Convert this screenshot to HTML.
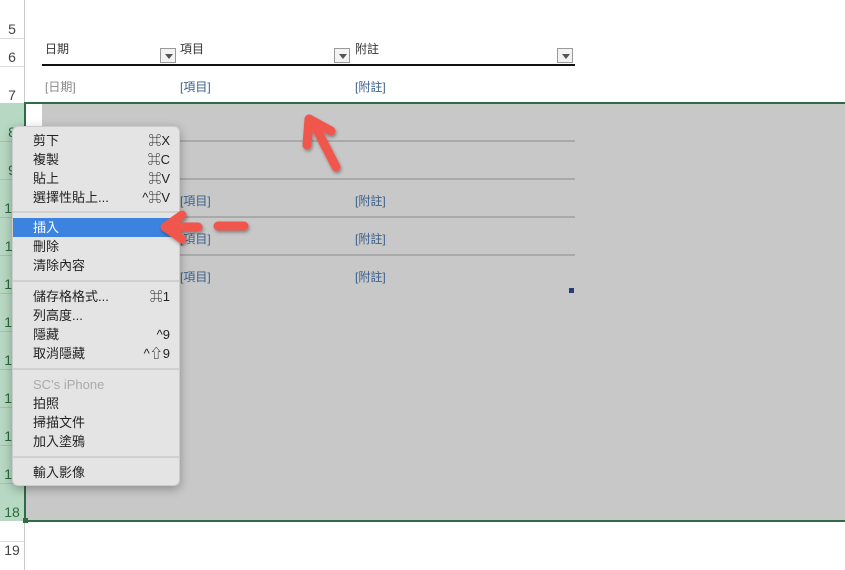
<!DOCTYPE html>
<html><head><meta charset="utf-8"><style>
*{margin:0;padding:0;box-sizing:border-box}
body{width:845px;height:570px;overflow:hidden;background:#fff;position:relative;font-family:"Liberation Sans","Noto Sans CJK TC",sans-serif}
.a{position:absolute}
.rh{position:absolute;left:0;width:24px;font-size:14px;color:#444;text-align:center}
.hl{position:absolute;left:0;width:24px;height:1px;background:#ddd}
.t{position:absolute;font-size:12px}
.lk{color:#3a5f8a}
.dd{position:absolute;width:16px;height:15px;border:1px solid #999;background:#f3f3f3}
.dd:after{content:"";position:absolute;left:4px;top:5px;border-left:4px solid transparent;border-right:4px solid transparent;border-top:5px solid #555}
.gl{position:absolute;left:42px;width:533px;height:2px;background:#a9a9a9}
.menu{position:absolute;left:12px;top:126px;width:168px;height:360px;background:#e4e4e4;border-radius:6px;box-shadow:0 3px 10px rgba(0,0,0,.3);border:1px solid #ccc}
.mi{position:absolute;left:0;width:166px;height:19px;font-size:13px;color:#222;padding-left:20px;line-height:19px}
.mi span{position:absolute;right:9px;top:0}
.sep{position:absolute;left:0;width:166px;height:2px;background:#d0d0d0}
</style></head><body>
<div class="a" style="left:0;top:103px;width:24px;height:418px;background:#b7d8c2"></div>
<div class="a" style="left:24px;top:0;width:1px;height:570px;background:#ccc"></div>
<div class="rh" style="top:21px">5</div>
<div class="rh" style="top:49px">6</div>
<div class="rh" style="top:87px">7</div>
<div class="rh" style="top:124px;color:#2a6a3c">8</div>
<div class="rh" style="top:162px;color:#2a6a3c">9</div>
<div class="rh" style="top:200px;color:#2a6a3c">10</div>
<div class="rh" style="top:238px;color:#2a6a3c">11</div>
<div class="rh" style="top:276px;color:#2a6a3c">12</div>
<div class="rh" style="top:314px;color:#2a6a3c">13</div>
<div class="rh" style="top:352px;color:#2a6a3c">14</div>
<div class="rh" style="top:390px;color:#2a6a3c">15</div>
<div class="rh" style="top:428px;color:#2a6a3c">16</div>
<div class="rh" style="top:466px;color:#2a6a3c">17</div>
<div class="rh" style="top:504px;color:#2a6a3c">18</div>
<div class="rh" style="top:542px">19</div>
<div class="hl" style="top:38px"></div><div class="hl" style="top:66px"></div><div class="hl" style="top:141px;background:#9cc7aa"></div><div class="hl" style="top:179px;background:#9cc7aa"></div><div class="hl" style="top:217px;background:#9cc7aa"></div><div class="hl" style="top:255px;background:#9cc7aa"></div><div class="hl" style="top:293px;background:#9cc7aa"></div><div class="hl" style="top:331px;background:#9cc7aa"></div><div class="hl" style="top:369px;background:#9cc7aa"></div><div class="hl" style="top:407px;background:#9cc7aa"></div><div class="hl" style="top:445px;background:#9cc7aa"></div><div class="hl" style="top:483px;background:#9cc7aa"></div><div class="hl" style="top:541px"></div>
<div class="t" style="left:45px;top:40px;color:#333">日期</div>
<div class="dd" style="left:160px;top:48px"></div>
<div class="t" style="left:180px;top:40px;color:#333">項目</div>
<div class="dd" style="left:334px;top:48px"></div>
<div class="t" style="left:355px;top:40px;color:#333">附註</div>
<div class="dd" style="left:557px;top:48px"></div>
<div class="a" style="left:42px;top:64px;width:533px;height:2px;background:#111"></div>
<div class="t" style="left:45px;top:78px;color:#888">[日期]</div>
<div class="t lk" style="left:180px;top:78px">[項目]</div>
<div class="t lk" style="left:355px;top:78px">[附註]</div>
<div class="a" style="left:25px;top:103px;width:820px;height:418px;background:#c8c8c8"></div>
<div class="a" style="left:25px;top:103px;width:17px;height:38px;background:#fff"></div>
<div class="a" style="left:24px;top:102px;width:821px;height:2px;background:#2f6b44"></div>
<div class="a" style="left:24px;top:520px;width:821px;height:2px;background:#2f6b44"></div>
<div class="a" style="left:24px;top:102px;width:2px;height:420px;background:#2f6b44"></div>
<div class="a" style="left:23px;top:518px;width:5px;height:5px;background:#2f6b44"></div>
<div class="gl" style="top:140px"></div><div class="gl" style="top:178px"></div><div class="gl" style="top:216px"></div><div class="gl" style="top:254px"></div>
<div class="t lk" style="left:180px;top:192px">[項目]</div><div class="t lk" style="left:355px;top:192px">[附註]</div>
<div class="t lk" style="left:180px;top:230px">[項目]</div><div class="t lk" style="left:355px;top:230px">[附註]</div>
<div class="t lk" style="left:180px;top:268px">[項目]</div><div class="t lk" style="left:355px;top:268px">[附註]</div>
<div class="a" style="left:569px;top:288px;width:5px;height:5px;background:#2a3a7a"></div>
<div class="menu">
<div class="mi" style="top:4px">剪下<span>⌘X</span></div>
<div class="mi" style="top:23px">複製<span>⌘C</span></div>
<div class="mi" style="top:42px">貼上<span>⌘V</span></div>
<div class="mi" style="top:61px">選擇性貼上...<span>^⌘V</span></div>
<div class="sep" style="top:84px"></div>
<div class="mi" style="top:91px;background:#3b83de;color:#fff">插入</div>
<div class="mi" style="top:110px">刪除</div>
<div class="mi" style="top:129px">清除內容</div>
<div class="sep" style="top:153px"></div>
<div class="mi" style="top:160px">儲存格格式...<span>⌘1</span></div>
<div class="mi" style="top:179px">列高度...</div>
<div class="mi" style="top:198px">隱藏<span>^9</span></div>
<div class="mi" style="top:217px">取消隱藏<span>^⇧9</span></div>
<div class="sep" style="top:241px"></div>
<div class="mi" style="top:248px;color:#aaa">SC’s iPhone</div>
<div class="mi" style="top:267px">拍照</div>
<div class="mi" style="top:286px">掃描文件</div>
<div class="mi" style="top:305px">加入塗鴉</div>
<div class="sep" style="top:329px"></div>
<div class="mi" style="top:336px">輸入影像</div>
</div>
<svg class="a" style="left:0;top:0" width="845" height="570">
<defs><filter id="s"><feDropShadow dx="1" dy="2" stdDeviation="1.5" flood-opacity=".35"/></filter></defs>
<g stroke="#f0574b" stroke-width="9" stroke-linecap="round" stroke-linejoin="round" fill="none" filter="url(#s)">
<path d="M182 215 L165 227 L182 239"/>
<path d="M168 227 L198 227"/>
<path d="M218 226 L244 226"/>
<path d="M307 145 L309 119 L331 131"/>
<path d="M314 124 L336 167"/>
</g>
</svg>
</body></html>
